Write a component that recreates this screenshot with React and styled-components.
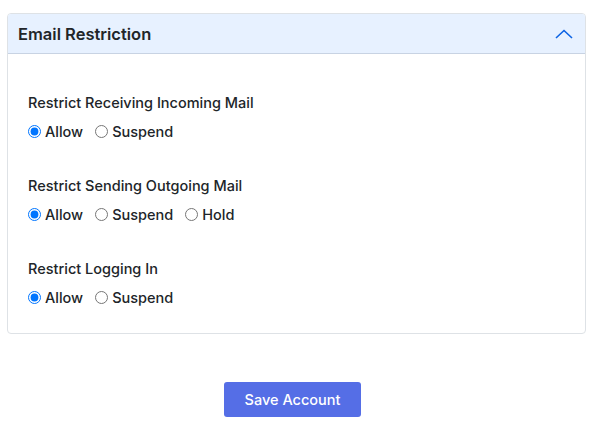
import React, { useState } from 'react'
import styled, { createGlobalStyle } from 'styled-components'

const GlobalStyle = createGlobalStyle`
  body {
    margin: 0;
    background: #ffffff;
    font-family: Inter, "Noto Sans", sans-serif;
    color: #212529;
  }
`

const Page = styled.div`
  display: flex;
  flex-direction: column;
  padding: 13px 8px 0 7px;
`

const Card = styled.div`
  border: 1px solid #dee2e6;
  border-radius: 4px;
  overflow: hidden;
`

const Header = styled.div`
  display: flex;
  align-items: center;
  justify-content: space-between;
  height: 39px;
  padding: 0 12px 0 10px;
  background: #e7f1ff;
  border-bottom: 1px solid #c8d3e3;
`

const Title = styled.h2`
  margin: 0;
  font-size: 16.5px;
  font-weight: 600;
  color: #212529;
`

const Body = styled.div`
  display: flex;
  flex-direction: column;
  gap: 33px;
  padding: 38px 20px 25px;
`

const Group = styled.div`
  display: flex;
  flex-direction: column;
  gap: 8px;
`

const Label = styled.div`
  font-size: 14.5px;
  font-weight: 500;
  line-height: 21px;
`

const Options = styled.div`
  display: flex;
  align-items: center;
  gap: 12px;
  height: 21px;
`

const Option = styled.label`
  display: flex;
  align-items: center;
  gap: 4px;
  font-size: 14.5px;
  font-weight: 500;
  cursor: pointer;
`

const Radio = styled.input`
  width: 13px;
  height: 13px;
  margin: 0;
  accent-color: #0075ff;
`

const Footer = styled.div`
  display: flex;
  justify-content: center;
  padding: 48px 8px 0 0;
`

const SaveButton = styled.button`
  width: 137px;
  height: 35px;
  border: none;
  border-radius: 3px;
  background: #556ee6;
  color: #ffffff;
  font-family: inherit;
  font-size: 14.5px;
  font-weight: 500;
  cursor: pointer;
`

const Chevron = () => (
  <svg width="18" height="10" viewBox="0 0 18 10" fill="none">
    <path d="M1 9 L9 1.5 L17 9" stroke="#0c63e4" strokeWidth="1.6" />
  </svg>
)

const restrictions = [
  { key: 'incoming', label: 'Restrict Receiving Incoming Mail', options: ['Allow', 'Suspend'] },
  { key: 'outgoing', label: 'Restrict Sending Outgoing Mail', options: ['Allow', 'Suspend', 'Hold'] },
  { key: 'login', label: 'Restrict Logging In', options: ['Allow', 'Suspend'] },
]

export default function App() {
  const [values, setValues] = useState({ incoming: 'Allow', outgoing: 'Allow', login: 'Allow' })

  return (
    <>
      <GlobalStyle />
      <Page>
        <Card>
          <Header>
            <Title>Email Restriction</Title>
            <Chevron />
          </Header>
          <Body>
            {restrictions.map(r => (
              <Group key={r.key}>
                <Label>{r.label}</Label>
                <Options>
                  {r.options.map(opt => (
                    <Option key={opt}>
                      <Radio
                        type="radio"
                        name={r.key}
                        checked={values[r.key] === opt}
                        onChange={() => setValues({ ...values, [r.key]: opt })}
                      />
                      {opt}
                    </Option>
                  ))}
                </Options>
              </Group>
            ))}
          </Body>
        </Card>
        <Footer>
          <SaveButton>Save Account</SaveButton>
        </Footer>
      </Page>
    </>
  )
}
